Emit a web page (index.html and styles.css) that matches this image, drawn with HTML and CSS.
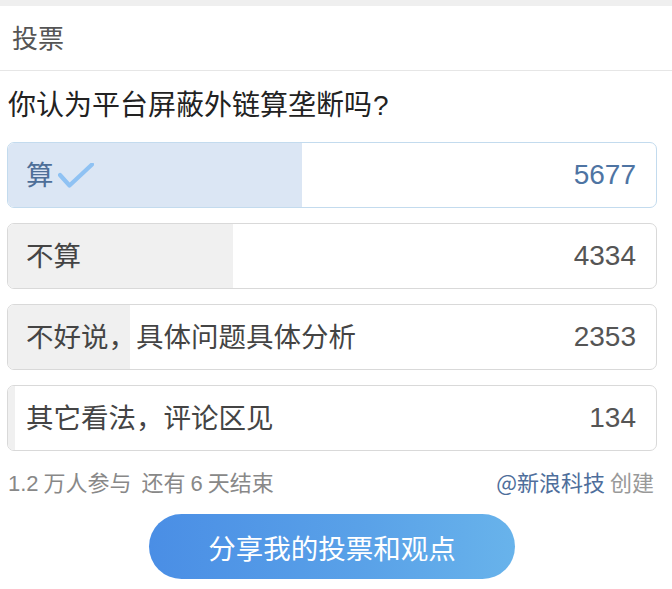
FILE: index.html
```html
<!DOCTYPE html>
<html lang="zh-CN">
<head>
<meta charset="utf-8">
<title>投票</title>
<link rel="stylesheet" href="styles.css">
</head>
<body>
<div class="topbar"></div>
<div class="header">投票</div>
<div class="poll">
  <div class="question">你认为平台屏蔽外链算垄断吗<span class="qmark">?</span></div>
  <div class="options">
    <div class="option selected">
      <div class="fill" style="width:45.4%"></div>
      <span class="label">算<svg class="check" width="36" height="26" viewBox="0 0 36 26"><path d="M2 12 L11.5 22.5 L34 1.5" fill="none" stroke="#8fc2f3" stroke-width="4.2" stroke-linecap="round" stroke-linejoin="round"/></svg></span>
      <span class="count">5677</span>
    </div>
    <div class="option">
      <div class="fill" style="width:34.7%"></div>
      <span class="label">不算</span>
      <span class="count">4334</span>
    </div>
    <div class="option">
      <div class="fill" style="width:18.8%"></div>
      <span class="label">不好说，具体问题具体分析</span>
      <span class="count">2353</span>
    </div>
    <div class="option">
      <div class="fill" style="width:1.1%"></div>
      <span class="label">其它看法，评论区见</span>
      <span class="count">134</span>
    </div>
  </div>
  <div class="meta">
    <span class="stats"><span class="num">1.2</span> 万人参与<span class="gap"></span>还有 <span class="num">6</span> 天结束</span>
    <span class="creator"><span class="author">@新浪科技</span> 创建</span>
  </div>
  <div class="actions">
    <button class="share">分享我的投票和观点</button>
  </div>
</div>
</body>
</html>
```
FILE: styles.css
```css
* { box-sizing: border-box; }
html, body {
  margin: 0;
  padding: 0;
  background: #fff;
  font-family: "Noto Sans CJK SC", sans-serif;
}
.topbar {
  height: 6px;
  background: #efefef;
}
.header {
  height: 65px;
  line-height: 62px;
  padding-left: 12px;
  font-size: 26px;
  color: #555;
  border-bottom: 1px solid #e6e6e6;
}
.poll {
  padding: 0 15px 0 7px;
}
.question {
  height: 71px;
  line-height: 64px;
  padding-left: 1px;
  font-size: 28px;
  color: #222;
  white-space: nowrap;
}
.qmark {
  font-family: "Liberation Sans", sans-serif;
  margin-left: 1px;
}
.options {
  display: flex;
  flex-direction: column;
  gap: 15px;
}
.option {
  position: relative;
  height: 66px;
  border: 1px solid #d9d9d9;
  border-radius: 7px;
  overflow: hidden;
  display: flex;
  align-items: center;
  justify-content: space-between;
  padding: 0 20px 0 18px;
  font-size: 27.5px;
  color: #444;
}
.option .fill {
  position: absolute;
  left: 0;
  top: 0;
  bottom: 0;
  background: #f0f0f0;
}
.option .label,
.option .count {
  position: relative;
  display: flex;
  align-items: center;
}
.option .label { margin-top: -4px; }
.option .count {
  font-family: "Liberation Sans", sans-serif;
  font-size: 28px;
  color: #555;
}
.option.selected {
  border-color: #c3dbee;
  color: #4e6f98;
}
.option.selected .fill { background: #dbe6f4; }
.option.selected .count { color: #4e74a3; }
.check {
  margin-left: 4px;
  margin-top: 6px;
}
.meta {
  display: flex;
  justify-content: space-between;
  align-items: center;
  height: 60px;
  padding: 0 3px 0 1px;
  font-size: 22px;
  color: #888;
}
.meta .num { font-family: "Liberation Sans", sans-serif; }
.gap { display: inline-block; width: 10px; }
.creator { color: #999; }
.author { color: #4e6e9b; }
.actions {
  display: flex;
  justify-content: center;
  padding-top: 3px;
}
.share {
  width: 366px;
  height: 65px;
  border: none;
  border-radius: 33px;
  background: linear-gradient(90deg, #4a8ee5 0%, #5aa2e8 60%, #68b3eb 100%);
  color: #fff;
  font-family: "Noto Sans CJK SC", sans-serif;
  font-size: 27.5px;
  padding: 0;
}
```
